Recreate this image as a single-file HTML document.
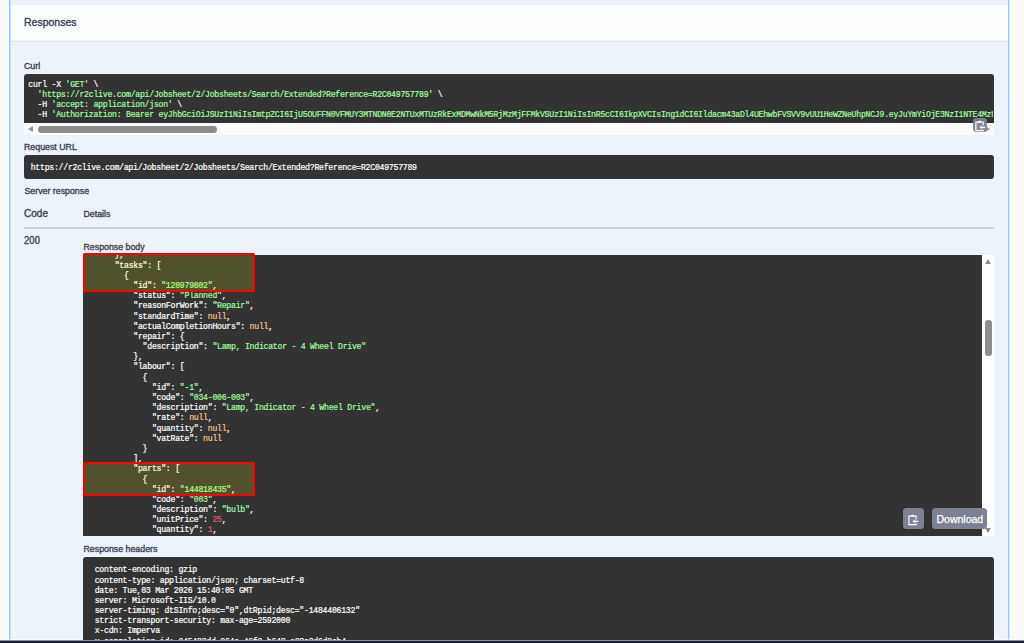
<!DOCTYPE html>
<html><head><meta charset="utf-8">
<style>
*{margin:0;padding:0;box-sizing:border-box}
html,body{width:1024px;height:643px;overflow:hidden;background:#f9f9f9;font-family:"Liberation Sans",sans-serif;color:#3b4151}
.abs{position:absolute}
#op{left:9px;top:0;width:999.6px;height:643px;background:#ecf3fb;border-left:1.8px solid #98c7f9;border-right:1.8px solid #98c7f9}
#hdr{left:10.8px;top:5px;width:997px;height:35px;background:#fcfdfe;box-shadow:0 1px 0 #f1f4f8,0 2px 0 #dce2ea}
.lbl{font-size:8.8px;line-height:1;white-space:nowrap;-webkit-text-stroke:0.35px #3b4151}
.mono{font-family:"Liberation Mono",monospace;font-weight:normal;-webkit-text-stroke:0.2px currentColor;white-space:pre;font-size:8.2px;letter-spacing:-0.262px;line-height:10.15px}
.pre{background:#333;overflow:hidden}
.g{color:#a2fca2}.o{color:#fcc28c}.r{color:#d36363}.w{color:#fff}
</style></head><body>
<div id="op" class="abs"></div>
<div id="hdr" class="abs"></div>
<div class="abs" style="left:10px;top:0;width:1px;height:643px;background:rgba(152,199,249,.45)"></div>
<div class="abs" style="left:1009px;top:0;width:1px;height:643px;background:rgba(152,199,249,.4)"></div>
<div class="abs lbl" style="left:24px;top:16.9px;font-size:10.5px;">Responses</div>

<div class="abs lbl" style="left:24px;top:62.05px">Curl</div>
<div class="abs pre" style="left:24.2px;top:74.2px;width:969.8px;height:49.3px;border-radius:3px 3px 0 0"></div>
<div class="abs mono w" style="left:28.3px;top:80px;width:965px;overflow:hidden">curl -X <span class="g">'GET'</span> \
  <span class="g">'https://r2clive.com/api/Jobsheet/2/Jobsheets/Search/Extended?Reference=R2C049757789'</span> \
  -H <span class="g">'accept: application/json'</span> \
  -H <span class="g">'Authorization: Bearer eyJhbGciOiJSUzI1NiIsImtpZCI6IjU5OUFFN0VFMUY3MTNDN0E2NTUxMTUzRkExMDMwNkM5RjMzMjFFMkVSUzI1NiIsInR5cCI6IkpXVCIsIng1dCI6Ildacm43aDl4UEhwbFVSVV9vUU1HeWZNeUhpNCJ9.eyJuYmYiOjE3NzI1NTE4MzUiLCJleHAiOjE3NzI1NTU0MzUsImlzcyI6Imh0dHBzOi8v'</span></div>
<div class="abs" style="left:24.2px;top:123px;width:969.8px;height:12px;background:#fbfbfb"></div>
<div class="abs" style="left:27.9px;top:126px;width:0;height:0;border-top:3.4px solid transparent;border-bottom:3.4px solid transparent;border-right:5.4px solid #8f8f8f"></div>
<div class="abs" style="left:38.2px;top:126px;width:179px;height:6.8px;background:#8c8c8c;border-radius:3.4px"></div>
<div class="abs" style="left:973px;top:118px;width:14px;height:13.5px;background:rgba(125,130,147,.92);border-radius:3px"><svg width="11" height="12" viewBox="0 0 11 12" style="position:absolute;left:1.6px;top:1.5px"><path d="M0.9 2.1H8.2V10.6H0.9Z" stroke="#fff" stroke-width="1.1" fill="none"/><path d="M2.8 2.3L3.3 0.9H4.1L4.6 0.2L5.2 0.9H6L6.5 2.3Z" fill="#fff"/><rect x="4.6" y="5.4" width="5.2" height="4.2" fill="#7d8293"/><path d="M4.6 7.5a2.1 2.1 0 0 1 1.9-2.1" stroke="#9aa0ad" stroke-width=".8" fill="none"/><path d="M10.2 7.4H6.4" stroke="#fff" stroke-width="1.5"/><path d="M4.6 7.4L6.8 5.6V9.2Z" fill="#fff"/></svg></div>

<div class="abs" style="left:985.2px;top:126.2px;width:0;height:0;border-top:3.3px solid transparent;border-bottom:3.3px solid transparent;border-left:5.4px solid #8f8f8f"></div>
<div class="abs lbl" style="left:24px;top:142.95px">Request URL</div>
<div class="abs pre" style="left:24.4px;top:155px;width:969.6px;height:23.5px;border-radius:3px"></div>
<div class="abs mono w" style="left:30.7px;top:162.7px">https://r2clive.com/api/Jobsheet/2/Jobsheets/Search/Extended?Reference=R2C049757789</div>

<div class="abs lbl" style="left:24.5px;top:186.65px">Server response</div>
<div class="abs lbl" style="left:24px;top:207.7px;font-size:10.6px;transform:scaleX(.95);transform-origin:0 0">Code</div>
<div class="abs lbl" style="left:83.5px;top:209.55px">Details</div>
<div class="abs" style="left:24px;top:227px;width:970px;height:1.6px;background:#cfd5de"></div>
<div class="abs lbl" style="left:24px;top:236.2px;font-size:10.4px;transform:scaleX(.92);transform-origin:0 0">200</div>

<div class="abs lbl" style="left:83.5px;top:243.15px">Response body</div>
<div class="abs pre" style="left:83px;top:255px;width:899px;height:281.4px">
<div class="abs mono w" style="left:3.8px;top:-4.6px;line-height:10.18px">      },
      "tasks": [
        {
          "id": <span class="g">"120979802"</span>,
          "status": <span class="g">"Planned"</span>,
          "reasonForWork": <span class="g">"Repair"</span>,
          "standardTime": <span class="o">null</span>,
          "actualCompletionHours": <span class="o">null</span>,
          "repair": {
            "description": <span class="g">"Lamp, Indicator - 4 Wheel Drive"</span>
          },
          "labour": [
            {
              "id": <span class="g">"-1"</span>,
              "code": <span class="g">"034-006-003"</span>,
              "description": <span class="g">"Lamp, Indicator - 4 Wheel Drive"</span>,
              "rate": <span class="o">null</span>,
              "quantity": <span class="o">null</span>,
              "vatRate": <span class="o">null</span>
            }
          ],
          "parts": [
            {
              "id": <span class="g">"144818435"</span>,
              "code": <span class="g">"003"</span>,
              "description": <span class="g">"bulb"</span>,
              "unitPrice": <span class="r">25</span>,
              "quantity": <span class="r">1</span>,
              "vatRate": <span class="r">20</span>
            }</div>
</div>
<div class="abs" style="left:83.1px;top:253.3px;width:172px;height:38.6px;border:2.3px solid #f00;border-radius:1.5px;background:rgba(255,255,0,.15)"></div>
<div class="abs" style="left:83px;top:462px;width:172px;height:34.4px;border:2.2px solid #f00;background:rgba(255,255,0,.15)"></div>
<div class="abs" style="left:982px;top:255px;width:12.4px;height:281.4px;background:#fdfdfd"></div>
<div class="abs" style="left:985px;top:258.6px;width:0;height:0;border-left:3.6px solid transparent;border-right:3.6px solid transparent;border-bottom:5.8px solid #8a8a8a"></div>
<div class="abs" style="left:985.2px;top:319.5px;width:6.6px;height:36px;background:#8e8e8e;border-radius:3.3px"></div>
<div class="abs" style="left:902.8px;top:508.4px;width:21px;height:21px;background:#7d8293;border-radius:3.5px"><svg width="11" height="12" viewBox="0 0 11 12" style="position:absolute;left:5.6px;top:5.3px"><path d="M0.9 2.1H8.2V10.6H0.9Z" stroke="#fff" stroke-width="1.1" fill="none"/><path d="M2.8 2.3L3.3 0.9H4.1L4.6 0.2L5.2 0.9H6L6.5 2.3Z" fill="#fff"/><rect x="4.6" y="5.4" width="5.2" height="4.2" fill="#7d8293"/><path d="M4.6 7.5a2.1 2.1 0 0 1 1.9-2.1" stroke="#9aa0ad" stroke-width=".8" fill="none"/><path d="M10.2 7.4H6.4" stroke="#fff" stroke-width="1.5"/><path d="M4.6 7.4L6.8 5.6V9.2Z" fill="#fff"/></svg></div>
<div class="abs" style="left:932.4px;top:508.4px;width:54.4px;height:21px;background:#7d8293;border-radius:3.5px"></div>
<div class="abs" style="left:936.5px;top:513.9px;font-size:10.5px;line-height:1;color:#fff;white-space:nowrap;-webkit-text-stroke:0.25px #fff">Download</div>
<div class="abs" style="left:985.3px;top:528px;width:0;height:0;border-left:3.35px solid transparent;border-right:3.35px solid transparent;border-top:5.3px solid #8a8a8a"></div>

<div class="abs lbl" style="left:83.5px;top:544.85px">Response headers</div>
<div class="abs" style="left:0;top:638.8px;width:1024px;height:1.6px;background:rgba(255,255,255,.65)"></div>
<div class="abs pre" style="left:83px;top:557px;width:911px;height:90px;border-radius:3px 3px 0 0"></div>
<div class="abs mono w" style="left:94.7px;top:565.4px;line-height:10.17px">content-encoding: gzip
content-type: application/json; charset=utf-8
date: Tue,03 Mar 2026 15:40:05 GMT
server: Microsoft-IIS/10.0
server-timing: dtSInfo;desc="0",dtRpid;desc="-1484406132"
strict-transport-security: max-age=2592000
x-cdn: Imperva
x-correlation-id: 045422dd-964a-46f0-b642-e02a2d6d0ab4</div>

<div class="abs" style="left:0;top:640.4px;width:1024px;height:0.8px;background:#8a909b"></div><div class="abs" style="left:0;top:641.1px;width:1024px;height:2px;background:#1b2236"></div>
</body></html>
